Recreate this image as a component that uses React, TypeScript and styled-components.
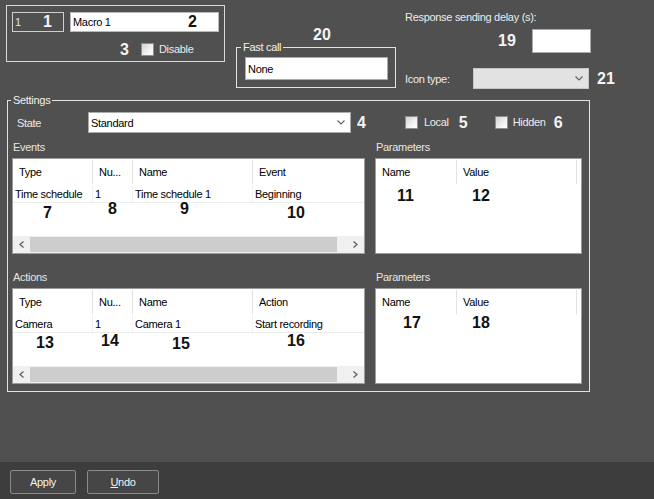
import styled, { createGlobalStyle } from "styled-components";

const GlobalStyle = createGlobalStyle`
  html, body {
    margin: 0;
    padding: 0;
    background: #505050;
  }
  body {
    font-family: "Liberation Sans", Arial, sans-serif;
    font-size: 11px;
  }
  *, *::before, *::after {
    box-sizing: border-box;
  }
`;

const Window = styled.div`
  width: 654px;
  height: 499px;
  display: flex;
  flex-direction: column;
  background: #505050;
  color: #ececec;
  letter-spacing: -0.3px;
  overflow: hidden;
`;

const Main = styled.div`
  flex: 1;
  display: flex;
  flex-direction: column;
`;

const TopRow = styled.div`
  display: flex;
  align-items: flex-start;
`;

// bold call-out numbers drawn over the dialog
const Num = styled.span<{ $dark?: boolean; $ml?: number }>`
  font-weight: bold;
  font-size: 16px;
  line-height: 12px;
  letter-spacing: 0;
  margin-left: ${(p) => p.$ml ?? 0}px;
  color: ${(p) => (p.$dark ? "#111" : "#f4f4f4")};
`;

const Text = styled.span<{ $ml?: number }>`
  margin-left: ${(p) => p.$ml ?? 0}px;
  line-height: 13px;
  white-space: nowrap;
`;

const CheckBox = styled.span<{ $ml?: number }>`
  flex: none;
  width: 13px;
  height: 13px;
  margin-left: ${(p) => p.$ml ?? 0}px;
  border: 1px solid #8e8e8e;
  background: linear-gradient(135deg, #d2d2d2 0%, #f4f4f4 65%, #ffffff 100%);
`;

/* ---------- macro id / name box ---------- */

const MacroBox = styled.div`
  margin: 5px 0 0 6px;
  width: 219px;
  height: 57px;
  border: 1px solid #d9d9d9;
  padding: 6px 0 0 5px;
  display: flex;
  flex-direction: column;
`;

const FieldRow = styled.div`
  display: flex;
  gap: 6px;
`;

const Field = styled.div<{ $w: number; $pr: number; $light?: boolean }>`
  width: ${(p) => p.$w}px;
  height: 20px;
  display: flex;
  align-items: center;
  justify-content: space-between;
  padding: 0 ${(p) => p.$pr}px 0 2px;
  border: 1px solid ${(p) => (p.$light ? "#b9b9b9" : "#cfcfcf")};
  background: ${(p) => (p.$light ? "#ffffff" : "transparent")};
  color: ${(p) => (p.$light ? "#000" : "#e4e4e4")};
`;

const DisableRow = styled.div`
  display: flex;
  align-items: center;
  height: 13px;
  margin: 11px 0 0 108px;
`;

/* ---------- fast call ---------- */

const FastCallCol = styled.div`
  margin-left: 11px;
  width: 160px;
  display: flex;
  flex-direction: column;
`;

const NumLine = styled.div`
  display: flex;
  padding: 29px 0 0 77px;
  height: 41px;
`;

const Group = styled.fieldset<{ $pad: string }>`
  margin: 0;
  min-width: 0;
  border: 1px solid #e2e2e2;
  padding: ${(p) => p.$pad};
`;

const Legend = styled.legend<{ $shift: number }>`
  padding: 0 2px;
  margin-left: ${(p) => p.$shift}px;
  line-height: 12px;
  font-size: 11px;
  color: #f0f0f0;
`;

const TextBox = styled.div<{ $w?: number; $h: number }>`
  width: ${(p) => (p.$w ? `${p.$w}px` : "100%")};
  height: ${(p) => p.$h}px;
  display: flex;
  align-items: center;
  padding-left: 2px;
  background: #ffffff;
  border: 1px solid #ababab;
  color: #000;
`;

/* ---------- right column ---------- */

const RightCol = styled.div`
  margin-left: 9px;
  display: flex;
  flex-direction: column;
`;

const DelayLabel = styled.div`
  margin-top: 11px;
  line-height: 13px;
`;

const DelayRow = styled.div`
  margin-top: 5px;
  height: 24px;
  display: flex;
  align-items: center;
  padding-left: 93px;
`;

const IconRow = styled.div`
  margin-top: 15px;
  height: 21px;
  display: flex;
  align-items: center;
`;

const IconLabel = styled.span`
  width: 68px;
`;

const Combo = styled.div<{ $w: number; $disabled?: boolean }>`
  width: ${(p) => p.$w}px;
  height: 21px;
  flex: none;
  display: flex;
  align-items: center;
  justify-content: space-between;
  padding: 0 5px 0 2px;
  border: 1px solid ${(p) => (p.$disabled ? "#c6c6c6" : "#ababab")};
  background: ${(p) => (p.$disabled ? "#e2e2e2" : "#ffffff")};
  color: #000;
`;

/* ---------- settings ---------- */

const Settings = styled(Group)`
  margin: 5px 0 0 7px;
  width: 583px;
`;

const StateRow = styled.div`
  height: 21px;
  display: flex;
  align-items: center;
`;

const StateLabel = styled.span`
  width: 76px;
  padding-left: 5px;
`;

const Panels = styled.div`
  margin-top: 8px;
  display: grid;
  grid-template-columns: 353px 207px;
  column-gap: 10px;
  row-gap: 17px;
`;

const Panel = styled.div`
  display: flex;
  flex-direction: column;
  gap: 4px;
`;

const Caption = styled.div`
  line-height: 13px;
  padding-left: 1px;
  color: #e6e6e6;
`;

const ListView = styled.div`
  height: 96px;
  border: 1px solid #9c9c9c;
  background: #ffffff;
  color: #000;
  display: flex;
  flex-direction: column;
`;

const HeaderRow = styled.div<{ $cols: string }>`
  display: grid;
  grid-template-columns: ${(p) => p.$cols};
  height: 26px;
  flex: none;
`;

const HeaderCell = styled.div`
  display: flex;
  align-items: center;
  padding-left: 6px;
  margin: 1px 0;
  border-right: 1px solid #e2e2e2;
  white-space: nowrap;
  overflow: hidden;
  &:last-child {
    border-right: none;
  }
`;

const DataRow = styled.div<{ $cols: string }>`
  display: grid;
  grid-template-columns: ${(p) => p.$cols};
  height: 18px;
  flex: none;
  border-bottom: 1px solid #ececec;
`;

const DataCell = styled.div`
  display: flex;
  align-items: center;
  padding-left: 2px;
  border-right: 1px solid #f1f1f1;
  white-space: nowrap;
  overflow: hidden;
  &:last-child {
    border-right: none;
  }
`;

const NumRow = styled.div<{ $cols: string }>`
  flex: 1;
  display: grid;
  grid-template-columns: ${(p) => p.$cols};
`;

const NumCell = styled.div<{ $pl: number; $pt: number }>`
  display: flex;
  align-items: flex-start;
  padding: ${(p) => p.$pt}px 0 0 ${(p) => p.$pl}px;
`;

const HScroll = styled.div`
  height: 17px;
  flex: none;
  display: flex;
  background: #f0f0f0;
`;

const ScrollBtn = styled.div`
  width: 17px;
  display: flex;
  align-items: center;
  justify-content: center;
`;

const Thumb = styled.div`
  width: 307px;
  margin: 1px 0;
  background: #cdcdcd;
`;

const Track = styled.div`
  flex: 1;
`;

/* ---------- bottom buttons ---------- */

const ButtonBar = styled.div`
  height: 37px;
  flex: none;
  display: flex;
  align-items: flex-start;
  gap: 11px;
  padding: 8px 0 0 10px;
  background: #3d3d3d;
`;

const Button = styled.button<{ $w: number }>`
  width: ${(p) => p.$w}px;
  height: 24px;
  padding: 0;
  border: 1px solid #8a8a8a;
  border-radius: 2px;
  background: #464646;
  color: #f2f2f2;
  font-family: "Liberation Sans", Arial, sans-serif;
  font-size: 11px;
  letter-spacing: -0.3px;
`;

function Chevron({ dir }: { dir: "down" | "left" | "right" }) {
  if (dir === "down") {
    return (
      <svg width="8" height="5" viewBox="0 0 8 5">
        <polyline points="0.5,0.5 4,4 7.5,0.5" fill="none" stroke="#606060" strokeWidth="1.1" />
      </svg>
    );
  }
  const pts = dir === "left" ? "4.5,0.5 1,3.5 4.5,6.5" : "0.5,0.5 4,3.5 0.5,6.5";
  return (
    <svg width="5" height="7" viewBox="0 0 5 7">
      <polyline points={pts} fill="none" stroke="#606060" strokeWidth="1.3" />
    </svg>
  );
}

type Callout = { n: string; pl: number; pt: number };

interface ListProps {
  cols: string;
  headers: string[];
  row?: string[];
  callouts: Callout[];
  scroll?: boolean;
}

function List({ cols, headers, row, callouts, scroll }: ListProps) {
  return (
    <ListView>
      <HeaderRow $cols={cols}>
        {headers.map((h) => (
          <HeaderCell key={h}>{h}</HeaderCell>
        ))}
      </HeaderRow>
      {row && (
        <DataRow $cols={cols}>
          {row.map((c, i) => (
            <DataCell key={i}>{c}</DataCell>
          ))}
        </DataRow>
      )}
      <NumRow $cols={cols}>
        {callouts.map((c) => (
          <NumCell key={c.n} $pl={c.pl} $pt={c.pt}>
            <Num $dark>{c.n}</Num>
          </NumCell>
        ))}
      </NumRow>
      {scroll && (
        <HScroll>
          <ScrollBtn>
            <Chevron dir="left" />
          </ScrollBtn>
          <Thumb />
          <Track />
          <ScrollBtn>
            <Chevron dir="right" />
          </ScrollBtn>
        </HScroll>
      )}
    </ListView>
  );
}

const listCols = "80px 40px 120px 1fr";
const paramCols = "81px 120px 1fr";

export default function App() {
  return (
    <>
      <GlobalStyle />
      <Window>
        <Main>
          <TopRow>
            <MacroBox>
              <FieldRow>
                <Field $w={52} $pr={11}>
                  <span>1</span>
                  <Num>1</Num>
                </Field>
                <Field $w={149} $pr={21} $light>
                  <span>Macro 1</span>
                  <Num $dark>2</Num>
                </Field>
              </FieldRow>
              <DisableRow>
                <Num>3</Num>
                <CheckBox $ml={12} />
                <Text $ml={5}>Disable</Text>
              </DisableRow>
            </MacroBox>

            <FastCallCol>
              <NumLine>
                <Num>20</Num>
              </NumLine>
              <Group $pad="4px 7px 7px 8px">
                <Legend $shift={-4}>Fast call</Legend>
                <TextBox $h={23}>None</TextBox>
              </Group>
            </FastCallCol>

            <RightCol>
              <DelayLabel>Response sending delay (s):</DelayLabel>
              <DelayRow>
                <Num>19</Num>
                <TextBox $w={59} $h={24} style={{ marginLeft: 16 }} />
              </DelayRow>
              <IconRow>
                <IconLabel>Icon type:</IconLabel>
                <Combo $w={116} $disabled>
                  <span />
                  <Chevron dir="down" />
                </Combo>
                <Num $ml={8}>21</Num>
              </IconRow>
            </RightCol>
          </TopRow>

          <Settings $pad="6px 7px 7px 4px">
            <Legend $shift={-1}>Settings</Legend>
            <StateRow>
              <StateLabel>State</StateLabel>
              <Combo $w={263}>
                <span>Standard</span>
                <Chevron dir="down" />
              </Combo>
              <Num $ml={6}>4</Num>
              <CheckBox $ml={39} />
              <Text $ml={6}>Local</Text>
              <Num $ml={10}>5</Num>
              <CheckBox $ml={27} />
              <Text $ml={5}>Hidden</Text>
              <Num $ml={8}>6</Num>
            </StateRow>

            <Panels>
              <Panel>
                <Caption>Events</Caption>
                <List
                  cols={listCols}
                  headers={["Type", "Nu...", "Name", "Event"]}
                  row={["Time schedule", "1", "Time schedule 1", "Beginning"]}
                  callouts={[
                    { n: "7", pl: 30, pt: 4 },
                    { n: "8", pl: 15, pt: 0 },
                    { n: "9", pl: 47, pt: 0 },
                    { n: "10", pl: 34, pt: 4 },
                  ]}
                  scroll
                />
              </Panel>
              <Panel>
                <Caption>Parameters</Caption>
                <List
                  cols={paramCols}
                  headers={["Name", "Value", ""]}
                  callouts={[
                    { n: "11", pl: 21, pt: 5 },
                    { n: "12", pl: 15, pt: 5 },
                  ]}
                />
              </Panel>
              <Panel>
                <Caption>Actions</Caption>
                <List
                  cols={listCols}
                  headers={["Type", "Nu...", "Name", "Action"]}
                  row={["Camera", "1", "Camera 1", "Start recording"]}
                  callouts={[
                    { n: "13", pl: 23, pt: 4 },
                    { n: "14", pl: 8, pt: 2 },
                    { n: "15", pl: 39, pt: 5 },
                    { n: "16", pl: 34, pt: 2 },
                  ]}
                  scroll
                />
              </Panel>
              <Panel>
                <Caption>Parameters</Caption>
                <List
                  cols={paramCols}
                  headers={["Name", "Value", ""]}
                  callouts={[
                    { n: "17", pl: 27, pt: 2 },
                    { n: "18", pl: 15, pt: 2 },
                  ]}
                />
              </Panel>
            </Panels>
          </Settings>
        </Main>

        <ButtonBar>
          <Button $w={66}>Apply</Button>
          <Button $w={72}>
            <u>U</u>ndo
          </Button>
        </ButtonBar>
      </Window>
    </>
  );
}
